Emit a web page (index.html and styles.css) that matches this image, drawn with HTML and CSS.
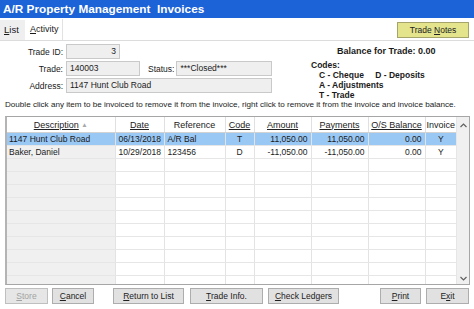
FILE: index.html
```html
<!DOCTYPE html>
<html lang="en">
<head>
  <meta charset="UTF-8">
  <title>A/R Property Management Invoices</title>
  <link rel="stylesheet" href="styles.css">
</head>
<body>

  <div class="titlebar">A/R Property Management&nbsp; Invoices</div>

  <div class="tabbar">
    <div class="tab"><u>L</u>ist</div>
    <div class="tab active"><u>A</u>ctivity</div>
    <div class="tabfill">
      <button class="notes">Trade <u>N</u>otes</button>
    </div>
  </div>

  <div class="panel">
    <div class="head">
      <div class="fields">
        <div class="row">
          <span class="label">Trade ID:</span>
          <div class="input num w-id">3</div>
        </div>
        <div class="row">
          <span class="label">Trade:</span>
          <div class="input w-trade">140003</div>
          <span class="status-label">Status:</span>
          <div class="input w-status">***Closed***</div>
        </div>
        <div class="row">
          <span class="label">Address:</span>
          <div class="input w-address">1147 Hunt Club Road</div>
        </div>
      </div>

      <div class="info">
        <div class="balance">Balance for Trade: 0.00</div>
        <div class="codes">
          <div>Codes:</div>
          <div class="code">C - Cheque <span class="gap">D - Deposits</span></div>
          <div class="code">A - Adjustments</div>
          <div class="code">T - Trade</div>
        </div>
      </div>
    </div>

    <p class="hint">Double click any item to be invoiced to remove it from the invoice, right click to remove it from the invoice and invoice balance.</p>

    <div class="grid">
      <table>
        <colgroup>
          <col class="c-desc">
          <col class="c-date">
          <col class="c-ref">
          <col class="c-code">
          <col class="c-amt">
          <col class="c-amt">
          <col class="c-amt">
          <col class="c-inv">
        </colgroup>
        <thead>
          <tr>
            <th><u>Description</u> <span class="sort">&#9650;</span></th>
            <th><u>Date</u></th>
            <th>Reference</th>
            <th><u>Code</u></th>
            <th><u>Amount</u></th>
            <th><u>Payments</u></th>
            <th><u>O/S Balance</u></th>
            <th>Invoice</th>
          </tr>
        </thead>
        <tbody id="rows">
          <tr class="selected">
            <td>1147 Hunt Club Road</td>
            <td class="r">06/13/2018</td>
            <td>A/R Bal</td>
            <td class="c">T</td>
            <td class="r">11,050.00</td>
            <td class="r">11,050.00</td>
            <td class="r">0.00</td>
            <td class="c">Y</td>
          </tr>
          <tr>
            <td>Baker, Daniel</td>
            <td class="r">10/29/2018</td>
            <td>123456</td>
            <td class="c">D</td>
            <td class="r">-11,050.00</td>
            <td class="r">-11,050.00</td>
            <td class="r">0.00</td>
            <td class="c">Y</td>
          </tr>
        </tbody>
      </table>

      <div class="scrollbar">
        <svg width="7" height="5" viewBox="0 0 7 5"><path d="M0.5 4 L3.5 1 L6.5 4" fill="none" stroke="#606060" stroke-width="1.2"/></svg>
        <svg width="7" height="5" viewBox="0 0 7 5"><path d="M0.5 1 L3.5 4 L6.5 1" fill="none" stroke="#606060" stroke-width="1.2"/></svg>
      </div>
    </div>

    <div class="buttons">
      <button class="btn w-store" disabled><u>S</u>tore</button>
      <button class="btn w-cancel"><u>C</u>ancel</button>
      <button class="btn w-return"><u>R</u>eturn to List</button>
      <button class="btn w-info"><u>T</u>rade Info.</button>
      <button class="btn w-ledgers"><u>C</u>heck Ledgers</button>
      <button class="btn w-print"><u>P</u>rint</button>
      <button class="btn w-exit">E<u>x</u>it</button>
    </div>
  </div>

  <script>
    // empty grid lines below the data rows
    const body = document.getElementById("rows");
    for (let i = 0; i < 11; i++) {
      const tr = document.createElement("tr");
      for (let j = 0; j < 8; j++) {
        tr.appendChild(document.createElement("td"));
      }
      body.appendChild(tr);
    }
  </script>

</body>
</html>
```

FILE: styles.css
```css
body {
  margin: 0;
  width: 474px;
  height: 309px;
  overflow: hidden;
  background-color: #fff;
  color: #1a1a1a;
  font-family: "Liberation Sans", Arial, sans-serif;
  font-size: 8.5px;
}

.titlebar {
  height: 18px;
  line-height: 18px;
  padding-left: 3px;
  background-color: #1d63d8;
  color: #fff;
  font-size: 11.8px;
  font-weight: bold;
  white-space: pre;
}

.tabbar {
  display: flex;
  align-items: flex-end;
  height: 22px;
  margin-top: 1px;
  border-bottom: 1px solid #dcdcdc;
  box-sizing: border-box;
}

.tab {
  height: 20px;
  line-height: 20px;
  font-size: 9.5px;
  box-sizing: border-box;
}

.tab:first-child {
  width: 25px;
  padding-left: 4px;
  background-color: #efefef;
}

.tab.active {
  width: 38px;
  height: 21px;
  padding-left: 5px;
  font-size: 9px;
  background-color: #fff;
  border-right: 1px solid #e2e2e2;
}

.tabfill {
  flex: 1;
  display: flex;
  justify-content: flex-end;
  align-self: stretch;
  padding: 3px 5px 0 0;
}

.notes {
  width: 72px;
  height: 16px;
  padding: 0;
  font-family: inherit;
  font-size: 8.5px;
  color: #222;
  background-color: #e4e48c;
  border: 1px solid #a5a56a;
}

.panel {
  padding: 3px 4px 0 5px;
}

.head {
  display: flex;
}

.fields {
  width: 306px;
  display: flex;
  flex-direction: column;
  gap: 2px;
}

.row {
  display: flex;
  align-items: center;
  height: 15px;
}

.label {
  width: 58px;
  margin-right: 3px;
  text-align: right;
}

.status-label {
  margin: 0 2px 0 8px;
  white-space: nowrap;
}

.input {
  height: 15px;
  line-height: 13px;
  padding: 0 3px;
  box-sizing: border-box;
  background-color: #efefef;
  border: 1px solid #c9c9c9;
  white-space: nowrap;
}

.num {
  text-align: right;
}

.w-id { width: 54px; }
.w-trade { width: 74px; }
.w-status { width: 96px; }
.w-address { width: 206px; }

.info {
  padding-top: 2px;
  font-weight: bold;
}

.balance {
  margin-left: 26px;
  font-size: 9px;
  line-height: 10px;
}

.codes {
  margin-top: 4px;
  line-height: 10px;
  font-size: 8.5px;
}

.code {
  padding-left: 8px;
}

.gap {
  margin-left: 9px;
}

.hint {
  margin: 0;
  line-height: 9px;
  font-size: 8.1px;
  color: #222;
  white-space: nowrap;
}

.grid {
  display: flex;
  margin-top: 7px;
  width: 465px;
  height: 169px;
  box-sizing: border-box;
  border: 1px solid #a6a6a6;
  border-left: 2px solid #b4b4b4;
  overflow: hidden;
}

table {
  width: 449px;
  table-layout: fixed;
  border-collapse: collapse;
  font-size: 8.5px;
}

.c-desc { width: 108px; }
.c-date { width: 49px; }
.c-ref { width: 61px; }
.c-code { width: 29px; }
.c-amt { width: 57px; }
.c-inv { width: 31px; }

th {
  height: 15px;
  padding: 0;
  font-size: 9px;
  font-weight: normal;
  text-align: center;
  color: #222;
  border-right: 1px solid #e0e0e0;
  border-bottom: 1px solid #d2d2d2;
  white-space: nowrap;
}

th:last-child {
  border-right: none;
}

.sort {
  color: #a8a8a8;
  font-size: 6.5px;
  vertical-align: 1px;
}

td {
  height: 12px;
  padding: 0 3px;
  line-height: 12px;
  border-right: 1px solid #e3e3e3;
  border-bottom: 1px solid #e6e6e6;
  white-space: nowrap;
  overflow: hidden;
}

td:first-child {
  background-color: #f0f0f0;
  padding-left: 2px;
}

td:last-child {
  border-right: none;
}

td.r { text-align: right; }
td.c { text-align: center; }

tr.selected td {
  background-color: #9ac8f5;
}

.scrollbar {
  width: 13px;
  display: flex;
  flex-direction: column;
  justify-content: space-between;
  align-items: center;
  padding: 6px 0 3px;
  background-color: #f0f0f0;
  border-left: 1px solid #e6e6e6;
}

.buttons {
  display: flex;
  margin-top: 3px;
}

.btn {
  height: 16px;
  padding: 0;
  font-family: inherit;
  font-size: 8.5px;
  color: #222;
  background-color: #e1e1e1;
  border: 1px solid #adadad;
}

.btn:disabled {
  color: #a2a2a2;
  background-color: #e6e6e6;
  border-color: #bfbfbf;
}

.w-store { width: 43px; }
.w-cancel { width: 42px; margin-left: 4px; }
.w-return { width: 71px; margin-left: 19px; }
.w-info { width: 73px; margin-left: 6px; }
.w-ledgers { width: 71px; margin-left: 5px; }
.w-print { width: 41px; margin-left: 41px; }
.w-exit { width: 43px; margin-left: 5px; }
```
